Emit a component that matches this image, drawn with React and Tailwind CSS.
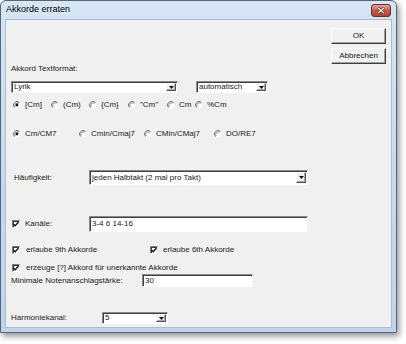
import React from "react";

const font = "font-['Liberation_Sans',Arial,sans-serif]";

const Radio = ({ checked }) => (
  <svg width="8" height="8" viewBox="0 0 8 8" className="shrink-0">
    <circle cx="4" cy="4" r="3.5" fill="#fff" stroke="#f4f4f4" />
    <path d="M1.5 6.5 A3.5 3.5 0 0 1 6.5 1.5" stroke="#7c7c7c" fill="none" />
    <path d="M2.2 5.8 A2.6 2.6 0 0 1 5.8 2.2" stroke="#3a3a3a" strokeWidth="0.6" fill="none" />
    {checked && <circle cx="4" cy="4" r="1.4" fill="#111" />}
  </svg>
);

const Check = () => (
  <div className="w-[8px] h-[8px] shrink-0 bg-white border border-t-[#7c7c7c] border-l-[#7c7c7c] border-b-white border-r-[#e6e6e6] shadow-[inset_1px_1px_0_#3a3a3a] flex items-center justify-center">
    <svg width="6" height="6" viewBox="0 0 6 6">
      <path d="M0.5 3 L2.2 4.7 L5.5 1" stroke="#111" strokeWidth="1.3" fill="none" />
    </svg>
  </div>
);

const Sunken = ({ className = "", children }) => (
  <div
    className={`bg-white border border-t-[#8a8a8a] border-l-[#8a8a8a] border-b-white border-r-[#f4f4f4] shadow-[inset_1px_1px_0_#404040] flex items-center ${className}`}
  >
    {children}
  </div>
);

const DropButton = () => (
  <div className="h-[calc(100%-2px)] w-[10px] mr-[1px] ml-auto shrink-0 bg-[#f0f0f0] border border-t-white border-l-white border-b-[#555] border-r-[#555] shadow-[inset_-1px_-1px_0_#a8a8a8] flex items-center justify-center">
    <svg width="5" height="3" viewBox="0 0 5 3">
      <path d="M0 0 H5 L2.5 3 Z" fill="#111" />
    </svg>
  </div>
);

const Combo = ({ value, className }) => (
  <Sunken className={className}>
    <span className="pl-[2px] text-[8px] leading-none text-[#1a1a1a] whitespace-nowrap">{value}</span>
    <DropButton />
  </Sunken>
);

const Button = ({ children }) => (
  <div className="w-[55px] h-[16px] bg-[#f0f0f0] border border-t-white border-l-white border-b-[#404040] border-r-[#404040] shadow-[inset_-1px_-1px_0_#a0a0a0] flex items-center justify-center text-[8px] text-[#1a1a1a]">
    {children}
  </div>
);

const RadioItem = ({ checked, label, w }) => (
  <div className={`flex items-center gap-[4px] ${w}`}>
    <Radio checked={checked} />
    <span className="whitespace-nowrap">{label}</span>
  </div>
);

export default function App() {
  return (
    <div className={`w-[406px] h-[344px] bg-white ${font}`}>
      <div className="w-[397px] h-[333px] rounded-t-[6px] border border-[#54667a] bg-gradient-to-b from-[#d7e5f4] via-[#c8daee] to-[#bfd3ea] shadow-[2px_3px_6px_rgba(0,0,0,0.45)] flex flex-col">
        {/* title bar */}
        <div className="h-[18px] flex items-center pl-[5px] pr-[5px] shrink-0">
          <span className="text-[9px] text-black">Akkorde erraten</span>
          <div className="ml-auto w-[20px] h-[13px] mt-[1px] rounded-[3px] border border-[#6b3030] bg-gradient-to-b from-[#e3a597] via-[#c95a4a] to-[#b8402f] flex items-center justify-center">
            <svg width="8" height="7" viewBox="0 0 8 7">
              <path d="M1 1 L7 6 M7 1 L1 6" stroke="#3b1a16" strokeWidth="2.6" />
              <path d="M1 1 L7 6 M7 1 L1 6" stroke="#fff" strokeWidth="1.4" />
            </svg>
          </div>
        </div>

        {/* client area */}
        <div className="mx-[4px] mb-[4px] flex-1 bg-[#f0f0f0] border border-[#a8bdd2] flex flex-col text-[8px] leading-none text-[#1a1a1a]">
          <div className="h-[44px] shrink-0 flex justify-end pr-[5px] pt-[8px]">
            <div className="flex flex-col gap-[4px]">
              <Button>OK</Button>
              <Button>Abbrechen</Button>
            </div>
          </div>

          <div className="h-[9px] flex items-center pl-[5px]">Akkord Textformat:</div>

          <div className="mt-[8px] h-[12px] flex pl-[5px]">
            <Combo value="Lyrik" className="w-[167px] h-[12px]" />
            <Combo value="automatisch" className="ml-[18px] w-[72px] h-[12px]" />
          </div>

          <div className="mt-[7px] h-[10px] flex items-center pl-[7px]">
            <RadioItem checked label="[Cm]" w="w-[38px]" />
            <RadioItem label="(Cm)" w="w-[38px]" />
            <RadioItem label="{Cm}" w="w-[39px]" />
            <RadioItem label={'"Cm"'} w="w-[39px]" />
            <RadioItem label="Cm" w="w-[28px]" />
            <RadioItem label="%Cm" w="" />
          </div>

          <div className="mt-[19px] h-[10px] flex items-center pl-[7px]">
            <RadioItem checked label="Cm/CM7" w="w-[66px]" />
            <RadioItem label="Cmin/Cmaj7" w="w-[65px]" />
            <RadioItem label="CMin/CMaj7" w="w-[70px]" />
            <RadioItem label="DO/RE7" w="" />
          </div>

          <div className="mt-[31px] h-[15px] flex items-center pl-[8px]">
            <span className="w-[75px]">Häufigkeit:</span>
            <Combo value="jeden Halbtakt (2 mal pro Takt)" className="w-[219px] h-[15px]" />
          </div>

          <div className="mt-[31px] h-[16px] flex items-center pl-[6px]">
            <Check />
            <span className="ml-[5px] w-[64px]">Kanäle:</span>
            <Sunken className="w-[219px] h-[16px]">
              <span className="pl-[2px]">3-4 6 14-16</span>
            </Sunken>
          </div>

          <div className="mt-[13px] h-[10px] flex items-center pl-[6px]">
            <div className="flex items-center w-[138px]">
              <Check />
              <span className="ml-[6px]">erlaube 9th Akkorde</span>
            </div>
            <Check />
            <span className="ml-[5px]">erlaube 6th Akkorde</span>
          </div>

          <div className="mt-[8px] h-[10px] flex items-center pl-[6px]">
            <Check />
            <span className="ml-[6px]">erzeuge [?] Akkord für unerkannte Akkorde</span>
          </div>

          <div className="mt-[1px] h-[13px] flex items-center pl-[5px]">
            <span className="w-[131px] whitespace-nowrap">Minimale Notenanschlagstärke:</span>
            <Sunken className="w-[111px] h-[13px]">
              <span className="pl-[2px]">30</span>
            </Sunken>
          </div>

          <div className="mt-[25px] h-[12px] flex items-center pl-[5px]">
            <span className="w-[91px]">Harmoniekanal:</span>
            <Combo value="5" className="w-[66px] h-[12px]" />
          </div>
        </div>
      </div>
    </div>
  );
}
